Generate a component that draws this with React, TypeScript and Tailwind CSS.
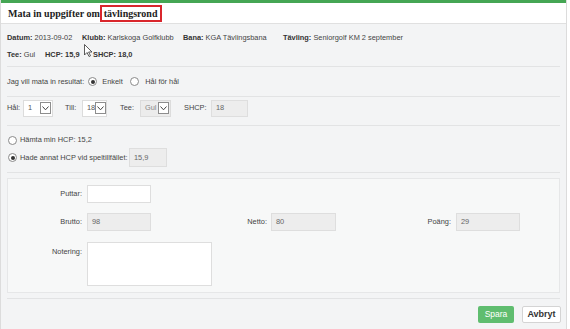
import React from "react";

const Radio = ({ checked }: { checked?: boolean }) => (
  <span className="inline-flex size-[9px] shrink-0 items-center justify-center rounded-full border border-[#8a8a8a] bg-white">
    {checked && <span className="size-[4px] rounded-full bg-[#333]" />}
  </span>
);

const Chevron = () => (
  <span className="flex h-[12px] w-[11px] shrink-0 items-center justify-center border border-[#8d8d8d] bg-white">
    <svg width="7" height="5" viewBox="0 0 7 5">
      <path d="M0.5 0.5 L3.5 3.8 L6.5 0.5" fill="none" stroke="#444" strokeWidth="1" />
    </svg>
  </span>
);

const Select = ({ value, disabled, w }: { value: string; disabled?: boolean; w: string }) => (
  <span
    className={`flex h-[17px] shrink-0 items-center justify-between border border-[#dcdcdc] pl-[4px] pr-[1px] ${w} ${
      disabled ? "bg-[#ececec] text-[#888]" : "bg-white text-[#555]"
    }`}
  >
    <span>{value}</span>
    <Chevron />
  </span>
);

const Field = ({ value, w, h = "h-[17px]", white }: { value?: string; w: string; h?: string; white?: boolean }) => (
  <span
    className={`flex shrink-0 items-center border border-[#dedede] px-[4px] text-[#666] ${w} ${h} ${
      white ? "bg-white" : "bg-[#ededed]"
    }`}
  >
    {value}
  </span>
);

const Sep = () => <div className="mx-[6px] h-px bg-[#e2e3e4]" />;

export default function App() {
  return (
    <div className="h-[329px] w-[570px] bg-white font-['Liberation_Sans',Arial,sans-serif] text-[7.4px] whitespace-nowrap text-[#444]">
      <div className="relative h-[329px] w-[567px] border-r border-l border-[#dcdcdc] bg-[#f3f4f5]">
        <div className="h-[3px] bg-[#45a654]" />
        <div className="flex h-[21px] items-center border-b border-[#e0e0e0] bg-white pl-[7px] font-['Liberation_Serif',serif] text-[10px] font-bold text-[#222]">
          <span>Mata in uppgifter om</span>
          <span className="flex h-[17px] items-center border-2 border-solid border-[#d9262c] px-[2px]">tävlingsrond</span>
        </div>

        <div className="px-[6px] pt-[5px] pb-[3px]">
          <div className="flex h-[17px] items-center">
            <span className="w-[75px]"><b className="text-[#333]">Datum:</b> 2013-09-02</span>
            <span className="w-[101px]"><b className="text-[#333]">Klubb:</b> Karlskoga Golfklubb</span>
            <span className="w-[100px]"><b className="text-[#333]">Bana:</b> KGA Tävlingsbana</span>
            <span><b className="text-[#333]">Tävling:</b> Seniorgolf KM 2 september</span>
          </div>
          <div className="flex h-[17px] items-center font-bold text-[#333]">
            <span className="w-[38px]">Tee: <span className="font-normal text-[#444]">Gul</span></span>
            <span className="w-[48px]">HCP: 15,9</span>
            <span>SHCP: 18,0</span>
          </div>
        </div>
        <Sep />

        <div className="flex h-[29px] items-center px-[6px]">
          <span className="mr-[4px]">Jag vill mata in resultat:</span>
          <Radio checked />
          <span className="ml-[5px] w-[28px]">Enkelt</span>
          <Radio />
          <span className="ml-[6px]">Hål för hål</span>
        </div>
        <Sep />

        <div className="flex h-[28px] items-center px-[6px] pb-[6px]">
          <span className="w-[16px]">Hål:</span>
          <Select value="1" w="w-[30px]" />
          <span className="ml-[12px] w-[17px]">Till:</span>
          <Select value="18" w="w-[25px]" />
          <span className="ml-[13px] w-[20px]">Tee:</span>
          <Select value="Gul" w="w-[31px]" disabled />
          <span className="ml-[13px] w-[27px]">SHCP:</span>
          <Field value="18" w="w-[37px]" />
        </div>
        <Sep />

        <div className="px-[7px] pt-[6px] pb-[5px]">
          <div className="flex h-[16px] items-center gap-[3px]">
            <Radio />
            <span>Hämta min HCP: 15,2</span>
          </div>
          <div className="flex h-[19px] items-center">
            <Radio checked />
            <span className="ml-[3px] w-[109px]">Hade annat HCP vid speltillfället:</span>
            <Field value="15,9" w="w-[38px]" h="h-[19px]" />
          </div>
        </div>
        <Sep />

        <div className="mx-[6px] mt-[5px] h-[115px] border border-[#e6e7e8] bg-[#f7f8f8] pt-[6px]">
          <div className="flex h-[18px] items-center">
            <span className="w-[79px] pr-[5px] text-right">Puttar:</span>
            <Field w="w-[64px]" h="h-[18px]" white />
          </div>
          <div className="mt-[10px] flex h-[18px] items-center">
            <span className="w-[79px] pr-[5px] text-right">Brutto:</span>
            <Field value="98" w="w-[64px]" h="h-[18px]" />
            <span className="w-[120px] pr-[4px] text-right">Netto:</span>
            <Field value="80" w="w-[65px]" h="h-[18px]" />
            <span className="w-[120px] pr-[5px] text-right">Poäng:</span>
            <Field value="29" w="w-[64px]" h="h-[18px]" />
          </div>
          <div className="mt-[11px] flex items-start">
            <span className="w-[79px] pt-[4px] pr-[5px] text-right">Notering:</span>
            <Field w="w-[125px]" h="h-[44px]" white />
          </div>
        </div>

        <div className="mx-[6px] mt-[5px] h-px bg-[#e2e3e4]" />
        <div className="flex justify-end gap-[8px] pt-[7px] pr-[5px]">
          <button className="h-[17px] w-[36px] rounded-[2px] bg-[#5fbd6f] text-[8.5px] text-white">Spara</button>
          <button className="h-[17px] w-[39px] rounded-[2px] border border-[#d4d4d4] bg-white text-[9px] font-bold text-[#333]">
            Avbryt
          </button>
        </div>

        <svg className="absolute top-[44px] left-[83px]" width="9" height="14" viewBox="0 0 9 14">
          <path d="M0.5 0.5 L0.5 11 L3 8.5 L5 12.5 L6.5 11.8 L4.6 8 L8 8 Z" fill="white" stroke="#333" strokeWidth="0.8" />
        </svg>
      </div>
    </div>
  );
}
